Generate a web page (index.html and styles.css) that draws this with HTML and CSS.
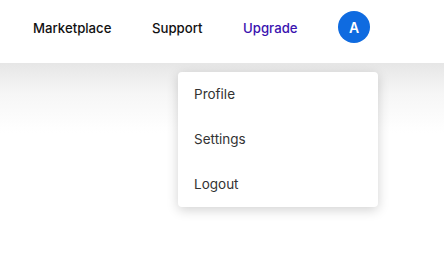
FILE: index.html
```html
<!DOCTYPE html>
<html lang="en">
<head>
    <meta charset="UTF-8">
    <title>Account Menu</title>
    <link rel="stylesheet" href="styles.css">
</head>
<body>
    <div class="header">
        <nav class="nav">
            <a href="#" class="nav-link">Marketplace</a>
            <a href="#" class="nav-link">Support</a>
            <a href="#" class="nav-link upgrade">Upgrade</a>
            <div class="account">
                <button class="avatar">A</button>
                <div class="dropdown">
                    <a href="#" class="dropdown-item">Profile</a>
                    <a href="#" class="dropdown-item">Settings</a>
                    <a href="#" class="dropdown-item">Logout</a>
                </div>
            </div>
        </nav>
    </div>
    <div class="content"></div>
</body>
</html>
```

FILE: styles.css
```css
body {
    font-family: Inter, "Noto Sans", sans-serif;
    margin: 0;
    background-color: white;
}

.header {
    background: white;
    height: 63px;
}

.nav {
    display: flex;
    align-items: center;
    padding: 11px 0 0 33px;
}

.nav-link {
    color: #111;
    text-decoration: none;
    font-size: 13.2px;
    font-weight: 500;
    margin-right: 40.5px;
    margin-top: 1px;
}

.upgrade {
    color: #3a12b0;
}

.account {
    position: relative;
}

.avatar {
    display: block;
    width: 32px;
    height: 32px;
    border-radius: 50%;
    border: none;
    background-color: #0f6be0;
    color: white;
    font-family: inherit;
    font-size: 14px;
    font-weight: 600;
    padding: 0;
    cursor: pointer;
}

.dropdown {
    position: absolute;
    top: 61px;
    left: -160px;
    width: 200px;
    background: white;
    border-radius: 4px;
    box-shadow: 0 3px 12px rgba(0,0,0,0.18);
    display: flex;
    flex-direction: column;
    z-index: 2;
}

.dropdown-item {
    color: #333;
    text-decoration: none;
    font-size: 13.5px;
    padding: 13px 16px;
    line-height: 19px;
}

.content {
    height: 194px;
    background: linear-gradient(#e6e6e6, #f6f6f6 30px, white 70px);
}
```
